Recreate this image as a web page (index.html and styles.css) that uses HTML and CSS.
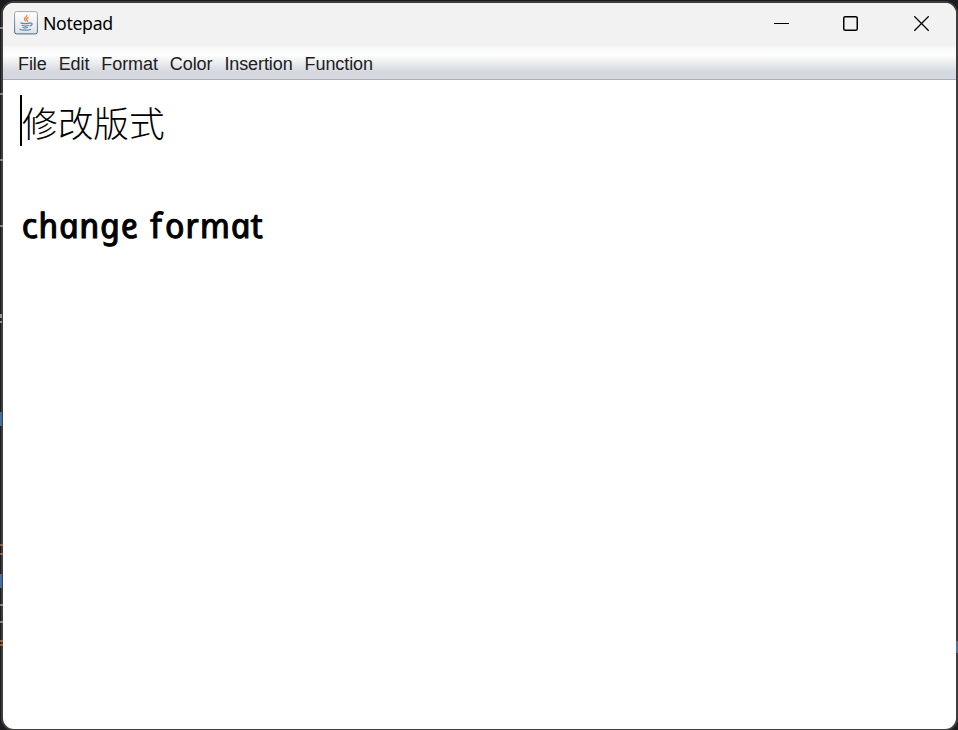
FILE: index.html
```html
<!DOCTYPE html>
<html lang="en">
<head>
<meta charset="utf-8">
<title>Notepad</title>
<link rel="stylesheet" href="styles.css">
</head>
<body>
<main class="window">
  <header class="titlebar">
    <svg class="app-icon" width="24" height="24" viewBox="0 0 24 24" fill="none">
      <defs><linearGradient id="tile" x2="0" y2="1"><stop stop-color="#fff"/><stop offset="1" stop-color="#dce3e8"/></linearGradient><linearGradient id="edge" x2="0" y2="1"><stop stop-color="#a9a9aa"/><stop offset="1" stop-color="#476680"/></linearGradient></defs>
      <rect x=".6" y=".6" width="22.8" height="22.3" rx="2" fill="url(#tile)" stroke="url(#edge)"/>
      <path d="M12.6 3.8c1.5 2.2-3.8 3.1-1.5 5.5l.8 1.2M14.6 6.4c-2.2 1-2.8 2-1.4 3.2.4.4.2.8-.2 1" stroke="#ed8636" stroke-width="1.3"/>
      <path d="M6.5 11.9c2 .9 7.5.9 9.5 0M7.8 14.3c1.8.7 5.5.7 7 0M8.5 16.3c1.5.6 4 .6 5.5 0M16 12.2c3.2-.6 2.6 2-.3 2.7M5.500 18.2c2.5 1.3 9.5 1.3 11.5 0" stroke="#5d87a6" stroke-width="1.2"/>
    </svg>
    <span class="caption">Notepad</span>
    <svg class="controls" width="156" height="16" viewBox="0 0 156 16" fill="none" stroke="#000">
      <path d="M0 7.5h15" stroke-width="1"/>
      <rect x="69.75" y=".75" width="13.5" height="13.5" rx="1.6" stroke-width="1.5"/>
      <path d="M140.3.3l14.4 14.4M154.7.3l-14.4 14.4" stroke-width="1.3"/>
    </svg>
  </header>
  <nav class="menubar">
    <span>File</span><span>Edit</span><span>Format</span><span>Color</span><span>Insertion</span><span>Function</span>
  </nav>
  <section class="editor">
    <p class="line heading" lang="zh"><i class="caret"></i>修改版式</p>
    <p class="line note"><span class="script">change <span class="stem">f</span>ormat</span></p>
  </section>
</main>
<svg class="backdrop" width="958" height="730" viewBox="0 0 958 730">
  <path d="M0 28h3M0 94h3M0 160h3M0 226h3M0 605h3M0 622h3" stroke="#a5a39f" stroke-width="1.5"/>
  <path d="M0 545h3M0 554h3M0 641h3M0 645h3" stroke="#b8714d" stroke-width="1.4"/>
  <path d="M0 314h2v4H0zM0 321h2v2H0z" fill="#8c969b"/>
  <path d="M0 412h2v14H0zM0 574h2v14H0zM956 641h2v12h-2z" fill="#496f9b"/>
</svg>
</body>
</html>
```
FILE: styles.css
```css
* { box-sizing: border-box; }
body {
  margin: 0;
  width: 958px;
  height: 730px;
  padding: 3px 2px 1px 3px;
  overflow: hidden;
  background: linear-gradient(90deg, #1a1b20 0 1px, #3c3d3f 2px 956px, #303134 957px);
}
.window {
  display: flex;
  flex-direction: column;
  height: 726px;
  border-radius: 11px;
  overflow: hidden;
  background: #fff;
  box-shadow: 0 0 0 2px #3d3d3e, 0 0 0 9px #1c1c20;
}
.titlebar {
  display: flex;
  align-items: flex-start;
  height: 43px;
  padding: 8px 26px 0 11px;
  background: #f2f2f2;
}
.caption {
  margin: 0 0 0 5px;
  font: 17.7px/25px "Noto Sans", sans-serif;
  letter-spacing: -0.35px;
  color: #000;
}
.controls { margin: 5px 0 0 auto; }
.menubar {
  display: flex;
  gap: 12px;
  height: 34px;
  padding-left: 15px;
  border-bottom: 1px solid #adb0b8;
  background: linear-gradient(#f6f8f7, #fdfefd 28%, #d5d8df 78%, #d5d8df);
  font: 18px/37px "Liberation Sans", sans-serif;
  letter-spacing: -0.09px;
  color: #202020;
}
.editor { padding: 15px 0 0 17px; color: #000; }
.line { margin: 0; white-space: nowrap; }
.heading {
  display: flex;
  height: 51px;
  font: 300 35.7px/54px "Noto Sans CJK SC", sans-serif;
}
.caret { width: 2px; height: 51px; background: #000; }
.note {
  margin-top: 51px;
  padding-left: 1px;
  font: italic 400 34.5px/55px "Noto Sans", sans-serif;
  letter-spacing: 0.75px;
  word-spacing: 1px;
}
.script {
  display: inline-block;
  transform: skewX(12deg);
  -webkit-text-stroke: 1px #000;
  stroke-linejoin: round;
}
.stem {
  display: inline-block;
  font-style: normal;
  transform: skewX(-12deg);
  margin: 0 2px 0 1px;
}
.backdrop { position: absolute; inset: 0; pointer-events: none; }
```
